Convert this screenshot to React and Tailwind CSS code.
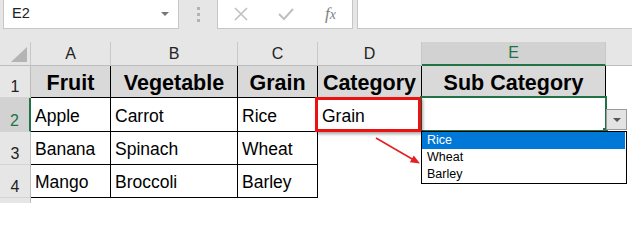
import React from 'react';

const rows = [
  ['Apple', 'Carrot', 'Rice'],
  ['Banana', 'Spinach', 'Wheat'],
  ['Mango', 'Broccoli', 'Barley'],
];

function ColHead({ label, active }) {
  return (
    <div
      className={`flex items-center justify-center border-r border-r-[#c8c8c8] text-[16px] leading-none ${
        active
          ? 'bg-[#d2d2d2] border-b-2 border-b-[#217346] text-[#217346]'
          : 'bg-[#e6e6e6] border-b border-b-[#bdbdbd] text-[#222]'
      }`}
    >
      {label}
    </div>
  );
}

function RowHead({ n, active }) {
  return (
    <div
      className={`flex items-end justify-center pb-[2px] border-b border-b-[#d4d4d4] text-[16px] leading-none ${
        active
          ? 'bg-[#d2d2d2] border-r-2 border-r-[#217346] text-[#217346]'
          : 'bg-[#e6e6e6] border-r border-r-[#bdbdbd] text-[#222]'
      }`}
    >
      {n}
    </div>
  );
}

function HeadCell({ children }) {
  return (
    <div className="flex items-end justify-center pb-[3px] bg-[#d9d9d9] border-r border-b border-black text-[21.5px] font-bold leading-none text-black">
      {children}
    </div>
  );
}

function DataCell({ children }) {
  return (
    <div className="flex items-end pl-[4px] pb-[6px] bg-white border-r border-b border-black text-[17.5px] leading-none text-black">
      {children}
    </div>
  );
}

export default function App() {
  return (
    <div className="relative w-[632px] h-[203px] overflow-hidden bg-white font-['Liberation_Sans',Arial,sans-serif]">
      {/* formula bar */}
      <div className="h-[42px] bg-[#e6e6e6]">
        <div className="flex h-[29px]">
          <div className="ml-[3px] w-[176px] bg-white border border-t-0 border-[#c6c6c6] flex items-center justify-between pl-[8px] pr-[9px]">
            <span className="text-[14.5px] text-[#222]">E2</span>
            <span className="w-0 h-0 border-l-[4px] border-r-[4px] border-t-[4px] border-l-transparent border-r-transparent border-t-[#777]" />
          </div>
          <div className="w-[38px] flex flex-col items-center justify-center gap-[3px]">
            <span className="w-[3px] h-[3px] bg-[#b4b4b4]" />
            <span className="w-[3px] h-[3px] bg-[#b4b4b4]" />
            <span className="w-[3px] h-[3px] bg-[#b4b4b4]" />
          </div>
          <div className="w-[136px] bg-white border border-t-0 border-[#c6c6c6] flex items-center">
            <svg width="14" height="14" viewBox="0 0 14 14" className="ml-[16px]">
              <path d="M1 1 L13 13 M13 1 L1 13" stroke="#c0c0c0" strokeWidth="1.6" fill="none" />
            </svg>
            <svg width="16" height="14" viewBox="0 0 16 14" className="ml-[30px]">
              <path d="M1 7 L6 12 L15 2" stroke="#c0c0c0" strokeWidth="2" fill="none" />
            </svg>
            <span className="ml-[31px] text-[17px] italic text-[#7f7f7f] font-['Liberation_Serif',serif]">
              f<span className="text-[14px]">x</span>
            </span>
          </div>
          <div className="ml-[4px] flex-1 bg-white border border-t-0 border-r-0 border-[#c6c6c6]" />
        </div>
      </div>

      {/* sheet */}
      <div className="grid h-[161px] grid-cols-[31px_80px_127px_80px_104px_184px_1fr] grid-rows-[24px_32px_34px_33px_33px_1fr]">
        <div className="flex items-end justify-end pr-[3px] pb-[3px] bg-[#e6e6e6] border-r border-b border-r-[#c8c8c8] border-b-[#bdbdbd]">
          <svg width="16" height="15" viewBox="0 0 16 15">
            <polygon points="0,15 16,15 16,0" fill="#b4b4b4" />
          </svg>
        </div>
        <ColHead label="A" />
        <ColHead label="B" />
        <ColHead label="C" />
        <ColHead label="D" />
        <ColHead label="E" active />
        <div className="bg-[#e6e6e6] border-b border-b-[#bdbdbd]" />

        <RowHead n="1" />
        <HeadCell>Fruit</HeadCell>
        <HeadCell>Vegetable</HeadCell>
        <HeadCell>Grain</HeadCell>
        <HeadCell>Category</HeadCell>
        <HeadCell>Sub Category</HeadCell>
        <div className="bg-white" />

        {rows.map((r, i) => (
          <React.Fragment key={i}>
            <RowHead n={String(i + 2)} active={i === 0} />
            <DataCell>{r[0]}</DataCell>
            <DataCell>{r[1]}</DataCell>
            <DataCell>{r[2]}</DataCell>
            {i === 0 ? <DataCell>Grain</DataCell> : <div className="bg-white" />}
            <div className="bg-white" />
            <div className="bg-white" />
          </React.Fragment>
        ))}

        <div className="bg-[#e6e6e6] border-r border-r-[#bdbdbd]" />
        <div className="col-span-6 bg-white" />
      </div>

      {/* selected cell E2 */}
      <div className="absolute left-[420px] top-[96px] w-[187px] h-[36px] border-2 border-[#217346]" />
      <div className="absolute left-[603px] top-[128px] w-[5px] h-[4px] bg-[#217346]" />

      {/* highlight on D2 */}
      <div className="absolute left-[315px] top-[97px] w-[106px] h-[35px] border-[3px] border-[#ee1111] shadow-[2px_2px_3px_rgba(0,0,0,0.35)]" />

      {/* arrow */}
      <svg className="absolute left-0 top-0" width="632" height="203" viewBox="0 0 632 203">
        <line x1="376" y1="138" x2="413" y2="159.5" stroke="#e52020" strokeWidth="1.6" />
        <polygon points="420,163.5 409.8,162.2 413.8,155.4" fill="#e52020" />
      </svg>

      {/* dropdown button */}
      <div className="absolute left-[606px] top-[109px] w-[21px] h-[21px] bg-[#e3e3e3] border border-[#9a9a9a] flex items-center justify-center">
        <span className="w-0 h-0 border-l-[4px] border-r-[4px] border-t-[4px] border-l-transparent border-r-transparent border-t-[#555]" />
      </div>

      {/* dropdown list */}
      <div className="absolute left-[421px] top-[131px] w-[206px] h-[53px] bg-white border border-black text-[12.5px] leading-none">
        <div className="h-[17px] mr-[1px] bg-[#0078d7] text-white flex items-center pl-[5px]">Rice</div>
        <div className="h-[17px] text-black flex items-center pl-[5px]">Wheat</div>
        <div className="h-[17px] text-black flex items-center pl-[5px]">Barley</div>
      </div>
    </div>
  );
}
